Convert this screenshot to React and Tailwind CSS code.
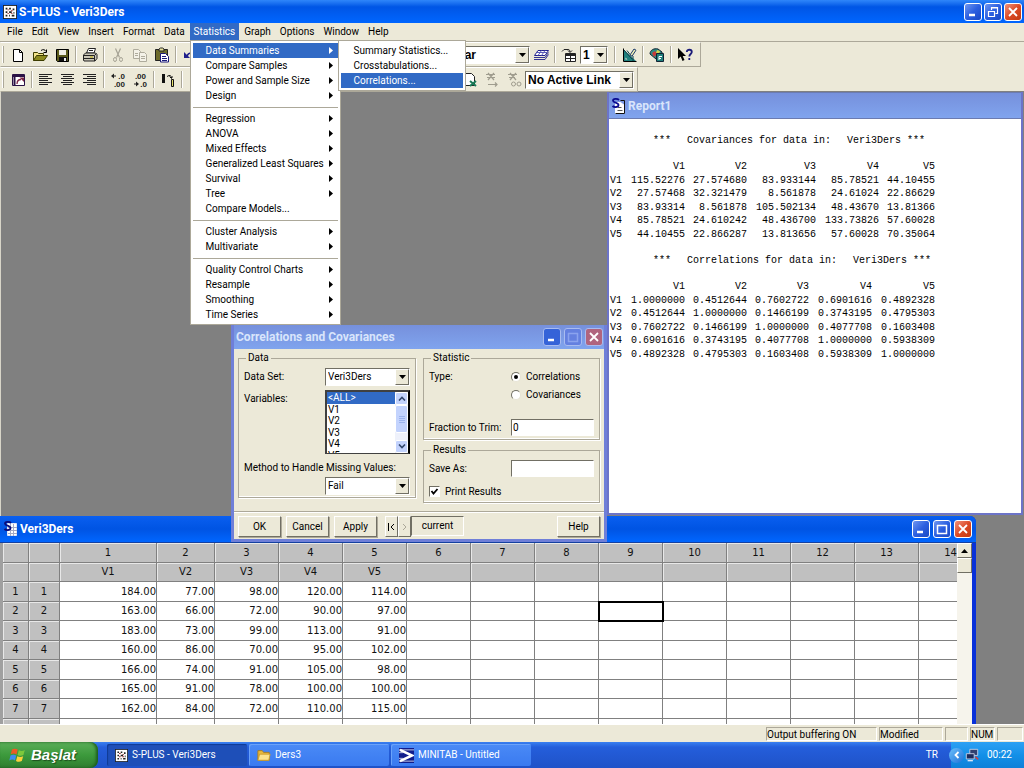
import React from "react";

const cx = (...parts) => parts.filter(Boolean).join(" ");

const MENUS = ["File", "Edit", "View", "Insert", "Format", "Data", "Statistics", "Graph", "Options", "Window", "Help"];

const STATISTICS_MENU = [
  ["Data Summaries", "Compare Samples", "Power and Sample Size", "Design"],
  ["Regression", "ANOVA", "Mixed Effects", "Generalized Least Squares", "Survival", "Tree", "Compare Models..."],
  ["Cluster Analysis", "Multivariate"],
  ["Quality Control Charts", "Resample", "Smoothing", "Time Series"],
];

const SUMMARY_MENU = ["Summary Statistics...", "Crosstabulations...", "Correlations..."];

const SHEET = [
  ["184.00", "77.00", "98.00", "120.00", "114.00"],
  ["163.00", "66.00", "72.00", "90.00", "97.00"],
  ["183.00", "73.00", "99.00", "113.00", "91.00"],
  ["160.00", "86.00", "70.00", "95.00", "102.00"],
  ["166.00", "74.00", "91.00", "105.00", "98.00"],
  ["165.00", "91.00", "78.00", "100.00", "100.00"],
  ["162.00", "84.00", "72.00", "110.00", "115.00"],
  ["", "", "", "", ""],
];

const COLUMNS = Array.from({ length: 14 }, (_, i) => i + 1);
const VARS = ["V1", "V2", "V3", "V4", "V5"];

const COVARIANCES = [
  ["115.52276", "27.574680", "83.933144", "85.78521", "44.10455"],
  ["27.57468", "32.321479", "8.561878", "24.61024", "22.86629"],
  ["83.93314", "8.561878", "105.502134", "48.43670", "13.81366"],
  ["85.78521", "24.610242", "48.436700", "133.73826", "57.60028"],
  ["44.10455", "22.866287", "13.813656", "57.60028", "70.35064"],
];

const CORRELATIONS = [
  ["1.0000000", "0.4512644", "0.7602722", "0.6901616", "0.4892328"],
  ["0.4512644", "1.0000000", "0.1466199", "0.3743195", "0.4795303"],
  ["0.7602722", "0.1466199", "1.0000000", "0.4077708", "0.1603408"],
  ["0.6901616", "0.3743195", "0.4077708", "1.0000000", "0.5938309"],
  ["0.4892328", "0.4795303", "0.1603408", "0.5938309", "1.0000000"],
];

/* ---------- icons ---------- */

function Icon({ children, className = "size-4" }) {
  return (
    <svg viewBox="0 0 16 16" className={cx("shrink-0", className)} fill="none" aria-hidden="true">
      {children}
    </svg>
  );
}

const AppIcon = ({ className }) => (
  <Icon className={className}>
    <rect x="0.5" y="0.5" width="15" height="15" fill="#fff" stroke="#222" />
    <path d="M3 3h2v2H3zM7 3h2v2H7zM11 4h2v2h-2zM3 7h2v2H3zM7 7h3v2H7zM12 8h1v2h-1zM3 11h2v2H3zM7 11h1v2H7zM10 11h3v2h-3z" fill="#222" />
    <path d="M5 5h2v1H5zM9 6h2v1H9zM5 9h2v1H5zM9 9h2v1H9z" fill="#a03030" />
  </Icon>
);

const ReportIcon = () => (
  <Icon>
    <path d="M4.500 4.500h5l4 3v8h-9z" fill="#fff" stroke="#fff" />
    <path d="M13.500 3.500v12h-9M9.500 2.500h4v3" stroke="#111" />
    <path d="M6.500 9.500h4M6.500 12.500h5" stroke="#555" />
    <path d="M8 2C6.500.5 2 .5 2 2.700S7.500 4.500 7.500 7 3 9.500 1.500 8" stroke="#0a0a90" strokeWidth="1.800" />
  </Icon>
);

const SheetIcon = () => (
  <Icon>
    <path d="M4.500 2.500h9v12h-9z" fill="#fff" stroke="#dfe4f6" />
    <path d="M7.500 3v12M10.500 3v12M5 6.500h9M5 9.500h9M5 12.500h9" stroke="#a4a9c4" />
    <path d="M8 2C6.500.5 2 .5 2 2.700S7.500 4.500 7.500 7 3 9.500 1.500 8" stroke="#0a0a78" strokeWidth="1.800" />
  </Icon>
);

const NewIcon = () => (
  <Icon>
    <path d="M3.500 2.500h6l3 3v9h-9z" fill="#fff" stroke="#000" />
    <path d="M9.500 2.500v3h3" stroke="#000" />
  </Icon>
);
const OpenIcon = () => (
  <Icon>
    <path d="M1.500 13.500v-8h4l1 1h5v2" fill="#f2e38a" stroke="#3c3c00" />
    <path d="M1.500 13.500l3-5h11l-3.500 5z" fill="#8c8a1e" stroke="#3c3c00" />
    <path d="M9 3.500c2-1.500 4-1 5 1M14.500 2.500v3h-3" stroke="#000" />
  </Icon>
);
const SaveIcon = () => (
  <Icon>
    <path d="M2.500 2.500h12v12h-11l-1-1z" fill="#5b5b1c" stroke="#000" />
    <path d="M5 3h7v5H5z" fill="#f0efe6" />
    <path d="M5 10h8v4H5z" fill="#111" />
    <path d="M10 11h2v3h-2z" fill="#eee" />
  </Icon>
);
const PrintIcon = () => (
  <Icon>
    <path d="M4.500 6l2-4.500h7L12 6z" fill="#fff" stroke="#222" />
    <path d="M1.500 8l2-2h10l1.500 1.500v4l-2 2.500h-11l-.500-1z" fill="#c9c6b7" stroke="#222" />
    <path d="M1.500 8.500h11l2-2M12.500 8.500V14M2 11.500h10M7 3.500h4" stroke="#222" />
    <path d="M8 9.500h3v1H8z" fill="#c0b000" />
  </Icon>
);
const CutIcon = () => (
  <Icon>
    <path d="M5.500 1.500l4 9M10.500 1.500l-4 9" stroke="#a5a294" strokeWidth="1.200" />
    <ellipse cx="5" cy="12.500" rx="1.500" ry="2" stroke="#a5a294" />
    <ellipse cx="11" cy="12.500" rx="1.500" ry="2" stroke="#a5a294" />
  </Icon>
);
const CopyIcon = () => (
  <Icon>
    <path d="M1.500 2.500h5l2 2v7h-7z" fill="#f4f2e8" stroke="#aeab9c" />
    <path d="M7.500 5.500h5l2 2v7h-7z" fill="#f4f2e8" stroke="#aeab9c" />
    <path d="M3 6.500h3M3 8.500h3M9 9.500h4M9 11.500h4" stroke="#aeab9c" />
  </Icon>
);
const PasteIcon = () => (
  <Icon>
    <path d="M1.500 2.500h12v11h-12z" fill="#6d6b2b" stroke="#222" />
    <path d="M5 4V2l1.500-1h2L10 2v2z" fill="#e4df9c" stroke="#222" />
    <path d="M6.500 6.500h5l3 3v5.500h-8z" fill="#fff" stroke="#1b1b7a" />
    <path d="M8 9.500h4M8 11.500h5M8 13.500h5" stroke="#1b1b7a" />
  </Icon>
);
const UndoIcon = () => (
  <Icon>
    <path d="M5 9c2-4 8-4 8 1 0 2-1 3-2 3.500" stroke="#20208c" strokeWidth="1.500" />
    <path d="M2 5v6h6z" fill="#20208c" />
  </Icon>
);
const LayersIcon = () => (
  <Icon>
    <path d="M5 3.500h10.500L12 8.500H1.500z" fill="#fff" stroke="#20208c" />
    <path d="M3.500 5.500h10.500M8.500 3.500L5 8.500M12 3.500L8.500 8.500" stroke="#5a5ab8" />
    <path d="M1 10.500h11l3.500-5M1 12.500h11l3.500-5" stroke="#20208c" strokeWidth="0.900" />
  </Icon>
);
const GridArrowIcon = () => (
  <Icon>
    <path d="M4.500 6.500h10v8h-10z" fill="#fff" stroke="#222" />
    <path d="M5 8h9" stroke="#222" strokeWidth="2" />
    <path d="M4.500 11.500h10M9.500 7v8" stroke="#222" />
    <path d="M1 4.500l2-2h4c1.500 0 2 1 2 2.500M7 3.500l2 2 2-2" stroke="#222" />
  </Icon>
);
const GraphEditIcon = () => (
  <Icon>
    <path d="M2 2v12h13z" fill="#1f7f7c" />
    <path d="M2.500 1.500v13h13" stroke="#000" />
    <path d="M3 3l8 9M6 3.500l3 4M12 9v5" stroke="#0d3f4a" />
    <path d="M9 8l4-6 2 1.200-4 6z" fill="#f1efb4" stroke="#1b3b6b" />
    <path d="M4.500 10.500v2h2z" fill="#ece9d8" />
  </Icon>
);
const PaletteIcon = () => (
  <Icon>
    <path d="M1 7c0-4 4-6 8-5l4 3v4l-6 3z" fill="#2c8c86" stroke="#123" />
    <path d="M3 6l3-2 2 3-3 3z" fill="#c93a3a" />
    <path d="M8 3l3 1-1 3-3-1z" fill="#d8d24a" />
    <path d="M7.500 6.500h7v8h-7z" fill="#1f7f7c" stroke="#123" />
    <path d="M10 13V9.500h3M10 11.500h2" stroke="#fff" />
  </Icon>
);
const HelpIcon = () => (
  <Icon>
    <path d="M1 1v11l2.700-2.500L5.500 14l2-1-1.800-4H9z" fill="#000" />
    <path d="M9.800 5c0-3 5-3 5 0 0 2-2.500 2-2.500 4.500M12.300 11v2" stroke="#1b1b7a" strokeWidth="1.800" />
  </Icon>
);
const ObjectIcon = () => (
  <Icon>
    <path d="M2.500 2.500h12v11h-12z" fill="#fff" stroke="#2a1145" />
    <path d="M3 4h11M4.500 3v10" stroke="#2a1145" strokeWidth="2" />
    <path d="M7 12c0-3 1.500-4.500 4-4.500" stroke="#7b2444" strokeWidth="1.300" />
    <path d="M9.500 5.500h4.500v4.500z" fill="#7b2444" />
  </Icon>
);
const AlignIcon = ({ d }) => (
  <Icon>
    <path d={d} stroke="#222" />
  </Icon>
);
const DecimalIcon = ({ top, bottom, topArrow }) => (
  <svg viewBox="0 0 16 16" className="size-4 shrink-0" aria-hidden="true">
    <text x={topArrow ? 15 : 14} y="7" textAnchor="end" fontSize="8" fontWeight="700" fontFamily="Liberation Sans, sans-serif" fill="#222">{top}</text>
    <text x="15" y="15" textAnchor="end" fontSize="8" fontWeight="700" fontFamily="Liberation Sans, sans-serif" fill="#222">{bottom}</text>
    <path d={topArrow ? "M1 4l3-2.500v2h2v1H4v2z" : "M7 12l-3-2.500v2H2v1h2v2z"} fill="#222" />
  </svg>
);
const ColumnIcon = () => (
  <Icon>
    <path d="M2 2h3v9H2z" fill="#111" />
    <path d="M11.500 7.500h2v7h-2z" fill="#e8e36b" stroke="#111" />
    <path d="M7 4.500l2-1c2 0 2.500 1 2.500 2.500M9.500 4.500l2 2 1-2" stroke="#111" />
  </Icon>
);
const ExcelIcon = () => (
  <Icon>
    <path d="M2.500 1.500h7l3 3v9h-10z" fill="#fff" stroke="#222" />
    <path d="M8 9l6 5M14 9l-6 5" stroke="#187a57" strokeWidth="2" />
  </Icon>
);
const LinkOffIcon = () => (
  <Icon>
    <path d="M2 2.500h9M4 1l6 7M10 1L4 8M3 5.500h8M4 12.500h9M11 10.500l2 2-2 2" stroke="#9f9c8e" strokeWidth="1.200" />
  </Icon>
);
const LinkBreakIcon = () => (
  <Icon>
    <path d="M2 2.500h9M4 1l6 7M10 1L4 8M3 5.500h6" stroke="#9f9c8e" strokeWidth="1.200" />
    <circle cx="7.500" cy="12" r="2" stroke="#9f9c8e" />
    <circle cx="13" cy="12" r="2" stroke="#9f9c8e" />
  </Icon>
);
const WindowsFlag = () => (
  <svg viewBox="0 0 18 18" className="size-[18px] shrink-0" aria-hidden="true">
    <path d="M3 3.500c2-1.300 4-1 5.700.1L7.500 8.600C5.800 7.400 4 7.300 1.800 8.300z" fill="#ee5a24" />
    <path d="M9.800 4.200c2 1.100 4 1 6-.2l-1.400 5c-1.900 1-3.900 1-5.800-.1z" fill="#7ec83c" />
    <path d="M1.500 9.500c2-1.100 4-1 5.700.1L6 14.500C4.300 13.400 2.400 13.300.3 14.400z" fill="#3f8cf0" />
    <path d="M8.300 10.200c2 1.100 3.900 1.100 5.900 0l-1.400 4.900c-1.900 1-3.900 1-5.800-.1z" fill="#fbd03b" />
  </svg>
);
const FolderIcon = () => (
  <Icon className="size-[14px]">
    <path d="M1 3h5l1.500 2H14v9H1z" fill="#e9b93b" stroke="#a97c1a" />
    <path d="M3 7h12l-1.500 7H1z" fill="#fbe28c" stroke="#c99a2c" />
  </Icon>
);
const MinitabIcon = () => (
  <Icon className="size-[15px]">
    <path d="M0 0h16v16H0z" fill="#101c8c" />
    <path d="M0 2h16M0 14h16M0 5h4M0 11h4" stroke="#fff" strokeWidth="0.800" />
    <path d="M1 2l13 6L1 14" stroke="#fff" strokeWidth="2.800" />
  </Icon>
);
const TrayMonitorsIcon = () => (
  <Icon className="size-[14px]">
    <path d="M5.500 1.500h9v7h-9z" fill="#31406f" stroke="#c9d3ea" />
    <path d="M1.500 6.500h9v6h-9z" fill="#1d2c5c" stroke="#c9d3ea" />
    <path d="M3 14.500h6" stroke="#e5eaf6" strokeWidth="1.500" />
    <path d="M12 10l3 3" stroke="#d34040" strokeWidth="2" />
  </Icon>
);

/* ---------- shared parts ---------- */

const RAISED = "border border-t-white border-l-white border-r-[#716f64] border-b-[#716f64] bg-[#ece9d8]";
const SUNKEN = "border border-t-[#716f64] border-l-[#716f64] border-r-white border-b-white bg-white";

function CaptionButton({ kind, dim }) {
  const close = kind === "Close";
  return (
    <button
      type="button"
      aria-label={kind}
      className={cx(
        "grid size-[18px] place-items-center rounded-[3px] border",
        dim ? "border-[#a9bcf0]" : "border-white",
        close && !dim && "bg-linear-to-br from-[#f09078] via-[#dc4a24] to-[#c23a10]",
        close && dim && "bg-[#b0647e]",
        !close && !dim && "bg-linear-to-br from-[#6f95f0] via-[#2c5fe0] to-[#1a48c4]",
        !close && dim && kind === "Minimize" && "bg-[#3563d8]",
        !close && dim && kind !== "Minimize" && "border-[#7f95e6] bg-[#6480e0]"
      )}
    >
      <svg viewBox="0 0 12 12" className="size-3" fill="none" stroke={dim && kind === "Maximize" ? "#8ba3ee" : "#fff"} aria-hidden="true">
        {kind === "Minimize" && <path d="M2 9h6" strokeWidth="2.500" />}
        {kind === "Maximize" && <path d="M1.500 2v8.500h9V2M1 2.500h10" strokeWidth="1.500" />}
        {kind === "Restore" && <path d="M1.500 5v5.500h6V5M1 5.500h7M4.500 4V1.500h6v6H8.500M4 2h7" strokeWidth="1.200" />}
        {close && <path d="M2 2l8 8M10 2l-8 8" strokeWidth="1.800" />}
      </svg>
    </button>
  );
}

function Combo({ label, value, id, className, bold }) {
  return (
    <span className={cx("flex h-[18px] shrink-0", SUNKEN, className)}>
      <select
        id={id}
        aria-label={label}
        defaultValue={value}
        className={cx("min-w-0 flex-1 appearance-none pl-[2px] outline-none", bold ? "font-[Liberation_Sans,sans-serif] text-[12px] font-bold" : "text-[10px]")}
      >
        <option>{value}</option>
      </select>
      <span className={cx("pointer-events-none grid w-[14px] place-items-center", RAISED)}>
        <svg viewBox="0 0 7 4" className="h-1 w-[7px]" aria-hidden="true"><path d="M0 0h7L3.500 4z" fill="#000" /></svg>
      </span>
    </span>
  );
}

function Tool({ label, children }) {
  return (
    <button type="button" aria-label={label} className="grid h-full w-[22px] shrink-0 place-items-center">
      {children}
    </button>
  );
}

const Divider = () => (
  <span className="flex w-[6px] shrink-0 justify-center py-[3px]">
    <span className="w-[2px] border-l border-[#aca899] bg-white" />
  </span>
);

const Grip = () => (
  <span className="flex w-[6px] shrink-0 py-[3px] pl-px">
    <span className="w-[2px] border-r border-[#aca899] bg-white" />
  </span>
);

function Toolbar({ children }) {
  return (
    <div role="toolbar" className="flex h-[25px] w-fit items-stretch border border-t-white border-r-[#aca899] border-b-[#aca899] border-l-[#ece9d8]">
      {children}
    </div>
  );
}

/* ---------- top of the application ---------- */

function MenuItem({ label, active, arrow }) {
  return (
    <button
      type="button"
      role="menuitem"
      className={cx("flex h-[15px] w-full items-center justify-between pr-[5px] text-left", active ? "bg-[#316ac5] text-white" : "text-black")}
    >
      <span>{label}</span>
      {arrow && <svg viewBox="0 0 4 7" className="h-[7px] w-1" aria-hidden="true"><path d="M0 0l4 3.500L0 7z" fill="currentColor" /></svg>}
    </button>
  );
}

function StatisticsMenu() {
  return (
    <div role="menu" className="absolute top-full left-0 z-30 w-[151px] border border-[#aca899] bg-white p-[2px] whitespace-nowrap">
      {STATISTICS_MENU.map((group, g) => (
        <div key={group[0]} className={cx("[&>*]:pl-[13px]", g > 0 && "mt-1 border-t border-[#aca899] pt-[3px]")}>
          {group.map((label, i) => (
            <MenuItem key={label} label={label} active={g === 0 && i === 0} arrow={!label.endsWith("...")} />
          ))}
        </div>
      ))}
      <div role="menu" className="absolute -top-px left-[147px] w-[128px] border border-[#aca899] bg-white p-[2px] [&>*]:pl-[13px]">
        {SUMMARY_MENU.map((label) => (
          <MenuItem key={label} label={label} active={label === "Correlations..."} />
        ))}
      </div>
    </div>
  );
}

function MenuBar() {
  return (
    <nav className="flex h-[19px] gap-px border-b border-[#aca899] pb-px pl-[3px]">
      {MENUS.map((name) => (
        <div key={name} className="relative">
          <button type="button" className={cx("h-full px-1", name === "Statistics" && "bg-[#316ac5] text-white")}>{name}</button>
          {name === "Statistics" && <StatisticsMenu />}
        </div>
      ))}
    </nav>
  );
}

function Toolbars() {
  return (
    <div className="h-[50px] border-b border-[#808080]">
      <Toolbar>
        <Grip />
        <Tool label="New"><NewIcon /></Tool>
        <Tool label="Open"><OpenIcon /></Tool>
        <Tool label="Save"><SaveIcon /></Tool>
        <Divider />
        <Tool label="Print"><PrintIcon /></Tool>
        <Divider />
        <Tool label="Cut"><CutIcon /></Tool>
        <Tool label="Copy"><CopyIcon /></Tool>
        <Tool label="Paste"><PasteIcon /></Tool>
        <Divider />
        <Tool label="Undo"><UndoIcon /></Tool>
        <span className="ml-[236px] flex items-center"><Combo label="Axis type" value="Linear" bold className="w-[93px]" /></span>
        <Tool label="Graph layers"><LayersIcon /></Tool>
        <Divider />
        <Tool label="Insert column"><GridArrowIcon /></Tool>
        <span className="mr-1 flex items-center"><Combo label="Count" value="1" bold className="w-[28px]" /></span>
        <Divider />
        <Tool label="Edit graph"><GraphEditIcon /></Tool>
        <Divider />
        <Tool label="Palette"><PaletteIcon /></Tool>
        <Divider />
        <Tool label="Help pointer"><HelpIcon /></Tool>
        <span className="w-1" />
      </Toolbar>
      <Toolbar>
        <Grip />
        <Tool label="Object browser"><ObjectIcon /></Tool>
        <Divider />
        <Tool label="Align left"><AlignIcon d="M1 2.500h13M1 4.500h9M1 6.500h13M1 8.500h9M1 10.500h13M1 12.500h9" /></Tool>
        <Tool label="Align center"><AlignIcon d="M1 2.500h13M3 4.500h9M1 6.500h13M3 8.500h9M1 10.500h13M3 12.500h9" /></Tool>
        <Tool label="Align right"><AlignIcon d="M1 2.500h13M5 4.500h9M1 6.500h13M5 8.500h9M1 10.500h13M5 12.500h9" /></Tool>
        <Divider />
        <Tool label="Increase decimals"><DecimalIcon top=".0" bottom=".00" topArrow /></Tool>
        <Tool label="Decrease decimals"><DecimalIcon top=".00" bottom=".0" /></Tool>
        <Divider />
        <Tool label="Column width"><ColumnIcon /></Tool>
        <Divider />
        <span className="ml-[274px] flex">
          <Tool label="Excel link"><ExcelIcon /></Tool>
          <Tool label="Update link"><LinkOffIcon /></Tool>
          <Tool label="Break link"><LinkBreakIcon /></Tool>
        </span>
        <span className="mr-[3px] flex items-center"><Combo label="Active link" value="No Active Link" bold className="w-[109px]" /></span>
      </Toolbar>
    </div>
  );
}

/* ---------- document windows ---------- */

function ReportTable({ title, widths, rows }) {
  return (
    <section className="mb-[13px]">
      <h2 className="mb-[13px] flex gap-4 pl-[43px] leading-[13px]">
        <span>***</span>
        <span>{title} for data in:</span>
        <span>Veri3Ders ***</span>
      </h2>
      <table className="table-fixed border-collapse text-right">
        <colgroup>{widths.map((w, i) => <col key={i} className={w} />)}</colgroup>
        <thead>
          <tr>
            <td className="h-[13px] p-0" />
            {VARS.map((v) => <th key={v} scope="col" className="p-0 font-normal">{v}</th>)}
          </tr>
        </thead>
        <tbody>
          {rows.map((row, r) => (
            <tr key={r} className="odd:h-[14px] even:h-[13px]">
              <th scope="row" className="p-0 text-left font-normal">{VARS[r]}</th>
              {row.map((v, i) => <td key={i} className="p-0">{v}</td>)}
            </tr>
          ))}
        </tbody>
      </table>
    </section>
  );
}

function ReportWindow() {
  return (
    <section className="absolute top-0 right-px left-[607px] flex h-[423px] flex-col border-x-2 border-b-2 border-[#6c74c8] bg-white">
      <header className="flex h-[27px] items-center gap-px border-y border-[#6b7bb0] bg-linear-to-b from-[#7690dc] to-[#80a4ee] pl-[2px] text-[12px] font-bold text-[#d9e5fb]">
        <ReportIcon />
        <h1>Report1</h1>
      </header>
      <div className="flex-1 overflow-hidden pt-[15px] pl-px font-[Liberation_Mono,monospace] text-[10px] leading-[13px] text-black">
        <ReportTable title="Covariances" rows={COVARIANCES} widths={["w-[13px]", "w-[62px]", "w-[62px]", "w-[69px]", "w-[63px]", "w-[56px]"]} />
        <ReportTable title="Correlations" rows={CORRELATIONS} widths={["w-[13px]", "w-[62px]", "w-[62px]", "w-[62px]", "w-[63px]", "w-[63px]"]} />
      </div>
    </section>
  );
}

const HEAD_CELL = "border-r border-b border-[#808080] bg-[#c0c0c0] p-0 text-center font-normal shadow-[inset_1px_1px_0_#e8e8e8]";

function SheetWindow() {
  return (
    <section className="absolute top-[424px] right-[48px] bottom-0 left-0 flex flex-col rounded-tr-[6px] bg-[#0831d9]">
      <header className="flex h-[27px] shrink-0 items-center gap-px rounded-tr-[6px] border-b border-[#1440a0] bg-linear-to-b from-[#0a5ff0] via-[#0054e3] to-[#0066ff] pr-1 pl-[3px]">
        <SheetIcon />
        <h1 className="flex-1 text-[12px] font-bold text-white">Veri3Ders</h1>
        <span className="flex gap-[3px]">
          <CaptionButton kind="Minimize" />
          <CaptionButton kind="Maximize" />
          <CaptionButton kind="Close" />
        </span>
      </header>
      <div className="mr-1 flex min-h-0 flex-1 border-l-[3px] border-[#a0a0a0] bg-white">
        <div className="flex-1 overflow-hidden">
          <table className="w-[980px] table-fixed border-separate border-spacing-0 font-[DejaVu_Sans,sans-serif] text-[10px] leading-[14px] text-[#111]">
            <colgroup>
              <col className="w-[26px]" />
              <col className="w-[31px]" />
              <col className="w-[97px]" />
              <col className="w-[58px]" />
              {COLUMNS.slice(2).map((c) => <col key={c} className="w-[64px]" />)}
            </colgroup>
            <thead>
              <tr className="h-5">
                <td className={HEAD_CELL} />
                <td className={HEAD_CELL} />
                {COLUMNS.map((c) => <th key={c} scope="col" className={HEAD_CELL}>{c}</th>)}
              </tr>
              <tr className="h-[19px]">
                <td className={HEAD_CELL} />
                <td className={HEAD_CELL} />
                {COLUMNS.map((c, i) => <th key={c} scope="col" className={HEAD_CELL}>{VARS[i]}</th>)}
              </tr>
            </thead>
            <tbody>
              {SHEET.map((row, r) => (
                <tr key={r} className="odd:h-5 even:h-[19px]">
                  <th scope="row" className={HEAD_CELL}>{r < 7 ? r + 1 : ""}</th>
                  <td className={HEAD_CELL}>{r < 7 ? r + 1 : ""}</td>
                  {COLUMNS.map((c, i) => (
                    <td
                      key={c}
                      className={cx("border-r border-b border-[#808080] p-0 text-right", r === 1 && c === 9 && "outline-2 -outline-offset-1 outline-black")}
                    >
                      {row[i]}
                    </td>
                  ))}
                </tr>
              ))}
            </tbody>
          </table>
        </div>
        <div className="w-[15px] shrink-0 bg-[#f6f4ec]">
          <button type="button" aria-label="Scroll up" className={cx("grid h-[15px] w-full place-items-center", RAISED)}>
            <svg viewBox="0 0 7 4" className="h-1 w-[7px]" aria-hidden="true"><path d="M0 4h7L3.500 0z" fill="#000" /></svg>
          </button>
          <div className={cx("h-[15px]", RAISED)} />
        </div>
      </div>
    </section>
  );
}

/* ---------- dialog ---------- */

const GROUP = "min-w-0 border border-[#aca899] px-[5px] shadow-[1px_1px_0_#fff,inset_0_-1px_0_#fff]";
const LEGEND = "ml-[2px] px-[2px] leading-[12px]";
const PUSH = cx("h-[21px] w-[43px]", RAISED, "shadow-[1px_1px_0_#aca899]");

function Radio({ id, label, checked }) {
  return (
    <span className="flex h-[17px] items-center gap-[5px]">
      <input
        type="radio"
        name="type"
        id={id}
        defaultChecked={checked}
        className="grid size-[10px] appearance-none place-items-center rounded-full border border-t-[#716f64] border-r-[#e6e3d4] border-b-[#e6e3d4] border-l-[#716f64] bg-white checked:before:size-1 checked:before:rounded-full checked:before:bg-black checked:before:content-['']"
      />
      <label htmlFor={id}>{label}</label>
    </span>
  );
}

function VariableList() {
  return (
    <div className="flex h-16 w-[85px] border-2 border-b border-[#404040] border-r-black bg-white">
      <select
        id="variables"
        size={6}
        defaultValue="<ALL>"
        className="h-full min-w-0 flex-1 appearance-none overflow-hidden p-0 text-[10px] outline-none"
      >
        {["<ALL>", ...VARS].map((v) => (
          <option
            key={v}
            className="min-h-0 p-0 pl-px leading-[11px] checked:bg-linear-to-r checked:from-[#316ac5] checked:to-[#316ac5] checked:[-webkit-text-fill-color:#fff] odd:h-[12px] even:h-[11px]"
          >
            {v}
          </option>
        ))}
      </select>
      <div className="flex w-[13px] flex-col bg-[#eef1fb]">
        <button type="button" aria-label="Scroll up" className="grid h-[13px] place-items-center rounded-[2px] border border-white bg-[#c3d3fd]">
          <svg viewBox="0 0 8 5" className="h-[5px] w-2" fill="none" stroke="#33486e" strokeWidth="1.600" aria-hidden="true"><path d="M1 4.500l3-3 3 3" /></svg>
        </button>
        <div className="grid h-7 place-items-center rounded-[2px] border border-white bg-[#c3d3fd]">
          <svg viewBox="0 0 6 7" className="h-[7px] w-[6px]" stroke="#9cb4ee" aria-hidden="true"><path d="M0 .5h6M0 2.500h6M0 4.500h6M0 6.500h6" /></svg>
        </div>
        <button type="button" aria-label="Scroll down" className="mt-auto grid h-[13px] place-items-center rounded-[2px] border border-white bg-[#c3d3fd]">
          <svg viewBox="0 0 8 5" className="h-[5px] w-2" fill="none" stroke="#33486e" strokeWidth="1.600" aria-hidden="true"><path d="M1 .5l3 3 3-3" /></svg>
        </button>
      </div>
    </div>
  );
}

function CorrelationsDialog() {
  return (
    <form
      role="dialog"
      aria-labelledby="dialog-title"
      onSubmit={(e) => e.preventDefault()}
      className="absolute top-[233px] left-[231px] z-10 w-[376px] border-[3px] border-t-0 border-[#6f7fd8] bg-[#ece9d8]"
    >
      <header className="flex h-[24px] items-center bg-linear-to-b from-[#7690dc] to-[#80a4ee] pr-px pl-[2px]">
        <h1 id="dialog-title" className="flex-1 text-[12px] font-bold text-[#d9e5fb]">Correlations and Covariances</h1>
        <span className="flex gap-[3px]">
          <CaptionButton kind="Minimize" dim />
          <CaptionButton kind="Maximize" dim />
          <CaptionButton kind="Close" dim />
        </span>
      </header>
      <div className="flex items-start gap-[7px] px-1 pt-[3px]">
        <fieldset className={cx("h-[146px] w-[178px]", GROUP)}>
          <legend className={LEGEND}>Data</legend>
          <div className="flex flex-col pt-1">
            <div className="flex items-center justify-between">
              <label htmlFor="data-set">Data Set:</label>
              <Combo id="data-set" value="Veri3Ders" className="w-[85px]" />
            </div>
            <div className="mt-1 flex items-start justify-between">
              <label htmlFor="variables" className="pt-[3px]">Variables:</label>
              <VariableList />
            </div>
            <label htmlFor="missing" className="mt-2 leading-[12px] whitespace-nowrap">Method to Handle Missing Values:</label>
            <div className="mt-[3px] flex justify-end">
              <Combo id="missing" value="Fail" className="w-[85px]" />
            </div>
          </div>
        </fieldset>
        <div className="flex min-w-0 flex-1 flex-col gap-1">
          <fieldset className={cx("h-[88px]", GROUP)}>
            <legend className={LEGEND}>Statistic</legend>
            <div className="grid grid-cols-[82px_1fr] items-center gap-y-px pt-1">
              <span>Type:</span>
              <Radio id="type-correlations" label="Correlations" checked />
              <span />
              <Radio id="type-covariances" label="Covariances" />
            </div>
            <div className="mt-4 grid grid-cols-[82px_1fr] items-center">
              <label htmlFor="trim" className="whitespace-nowrap">Fraction to Trim:</label>
              <input id="trim" type="text" defaultValue="0" className={cx("h-[17px] w-full min-w-0 px-px outline-none", SUNKEN)} />
            </div>
          </fieldset>
          <fieldset className={cx("h-[59px]", GROUP)}>
            <legend className={LEGEND}>Results</legend>
            <div className="grid grid-cols-[82px_1fr] items-center pt-1">
              <label htmlFor="save-as">Save As:</label>
              <input id="save-as" type="text" className={cx("h-[17px] w-full min-w-0 px-px outline-none", SUNKEN)} />
            </div>
            <div className="mt-[6px] flex h-[17px] items-center gap-[5px]">
              <span className="grid">
                <input id="print" type="checkbox" defaultChecked className={cx("col-start-1 row-start-1 size-[11px] appearance-none", SUNKEN)} />
                <svg viewBox="0 0 11 11" className="pointer-events-none col-start-1 row-start-1 size-[11px]" fill="none" stroke="#000" strokeWidth="1.800" aria-hidden="true"><path d="M2.500 5l2 2.500L8.500 3" /></svg>
              </span>
              <label htmlFor="print">Print Results</label>
            </div>
          </fieldset>
        </div>
      </div>
      <footer className="mt-2 flex items-start gap-[5px] border-t border-[#aca899] px-1 pt-1 pb-[2px] shadow-[inset_0_1px_0_#fff]">
        <button type="submit" className={PUSH}>OK</button>
        <button type="button" className={PUSH}>Cancel</button>
        <button type="button" className={PUSH}>Apply</button>
        <span className="ml-[3px] flex">
          <button type="button" aria-label="First" className={cx("grid h-[21px] w-[13px] place-items-center", RAISED)}>
            <svg viewBox="0 0 7 8" className="h-2 w-[7px]" fill="none" stroke="#000" aria-hidden="true"><path d="M.5 0v8M6 1L3 4l3 3" /></svg>
          </button>
          <button type="button" aria-label="Next" className={cx("grid h-[21px] w-[13px] place-items-center", RAISED)}>
            <svg viewBox="0 0 5 8" className="h-2 w-[5px]" fill="none" stroke="#aca899" aria-hidden="true"><path d="M1 1l3 3-3 3" /></svg>
          </button>
          <output className="grid h-[20px] w-[53px] place-items-center border border-t-[#716f64] border-r-white border-b-white border-l-[#716f64]">current</output>
        </span>
        <button type="button" className={cx("ml-auto", PUSH)}>Help</button>
      </footer>
    </form>
  );
}

/* ---------- bottom of the screen ---------- */

const STATUS_CELL = "h-[14px] border border-t-[#aca899] border-r-white border-b-white border-l-[#aca899] leading-[13px] whitespace-nowrap";

function TaskButton({ icon, label, active }) {
  return (
    <button
      type="button"
      className={cx(
        "flex h-[22px] w-[140px] items-center gap-1 rounded-[2px] pl-2 text-white",
        active ? "bg-[#1e4fb8] shadow-[inset_1px_1px_1px_#0f3a94]" : "bg-linear-to-b from-[#4a8af6] to-[#3a7af0] shadow-[inset_1px_1px_0_#6aa2fa]"
      )}
    >
      {icon}
      {label}
    </button>
  );
}

export default function App() {
  return (
    <div className="flex h-screen flex-col overflow-hidden bg-[#ece9d8] font-[Roboto,sans-serif] text-[10px] leading-[12px] text-black select-none">
      <header className="flex h-[23px] shrink-0 items-center gap-[2px] bg-linear-to-b from-[#2f86fa] via-[#0055e5] via-30% to-[#0066ff] pr-[2px] pl-[3px]">
        <AppIcon className="size-[14px]" />
        <h1 className="flex-1 text-[12px] font-bold text-white">S-PLUS - Veri3Ders</h1>
        <span className="flex gap-[2px]">
          <CaptionButton kind="Minimize" />
          <CaptionButton kind="Restore" />
          <CaptionButton kind="Close" />
        </span>
      </header>
      <MenuBar />
      <Toolbars />
      <main className="relative min-h-0 flex-1 overflow-hidden bg-[#808080] shadow-[inset_1px_0_0_#d8d5c8]">
        <ReportWindow />
        <SheetWindow />
        <CorrelationsDialog />
      </main>
      <footer className="flex h-[18px] shrink-0 items-center justify-end gap-[2px] border-t border-white pr-px">
        <span className={cx("w-[111px]", STATUS_CELL)}>Output buffering ON</span>
        <span className={cx("w-[64px]", STATUS_CELL)}>Modified</span>
        <span className={cx("w-[23px]", STATUS_CELL)} />
        <span className={cx("w-[25px]", STATUS_CELL)}>NUM</span>
        <span className={cx("w-[26px]", STATUS_CELL)} />
      </footer>
      <div className="flex h-[26px] shrink-0 items-stretch bg-linear-to-b from-[#3a80f0] via-[#245edb] via-20% to-[#1f52c8]">
        <button type="button" className="flex w-[98px] items-center gap-1 rounded-r-[8px] bg-linear-to-b from-[#5aae58] via-[#3c9a3c] to-[#2f7d2f] pl-[9px] font-[Liberation_Sans,sans-serif] text-[15px] leading-[18px] font-bold text-white italic shadow-[inset_-2px_0_3px_#1d5c1d] text-shadow-[1px_1px_1px_#1c4d1c]">
          <WindowsFlag />
          Başlat
        </button>
        <nav className="ml-[9px] flex flex-1 items-center gap-[2px]">
          <TaskButton icon={<AppIcon className="size-[13px]" />} label="S-PLUS - Veri3Ders" active />
          <TaskButton icon={<FolderIcon />} label="Ders3" />
          <TaskButton icon={<MinitabIcon />} label="MINITAB - Untitled" />
        </nav>
        <span className="flex items-center pr-[13px] text-white">TR</span>
        <div className="flex w-[73px] items-center bg-linear-to-b from-[#2ca0f4] via-[#1290e8] to-[#0f80d8] text-white">
          <button type="button" aria-label="Show hidden icons" className="-ml-[2px] grid size-[15px] place-items-center rounded-full bg-linear-to-br from-[#6cc0fa] to-[#1c70d8]">
            <svg viewBox="0 0 8 8" className="size-2" fill="none" stroke="#fff" strokeWidth="1.800" aria-hidden="true"><path d="M5.500 1l-3 3 3 3" /></svg>
          </button>
          <span className="ml-px"><TrayMonitorsIcon /></span>
          <time className="ml-2">00:22</time>
        </div>
      </div>
    </div>
  );
}
